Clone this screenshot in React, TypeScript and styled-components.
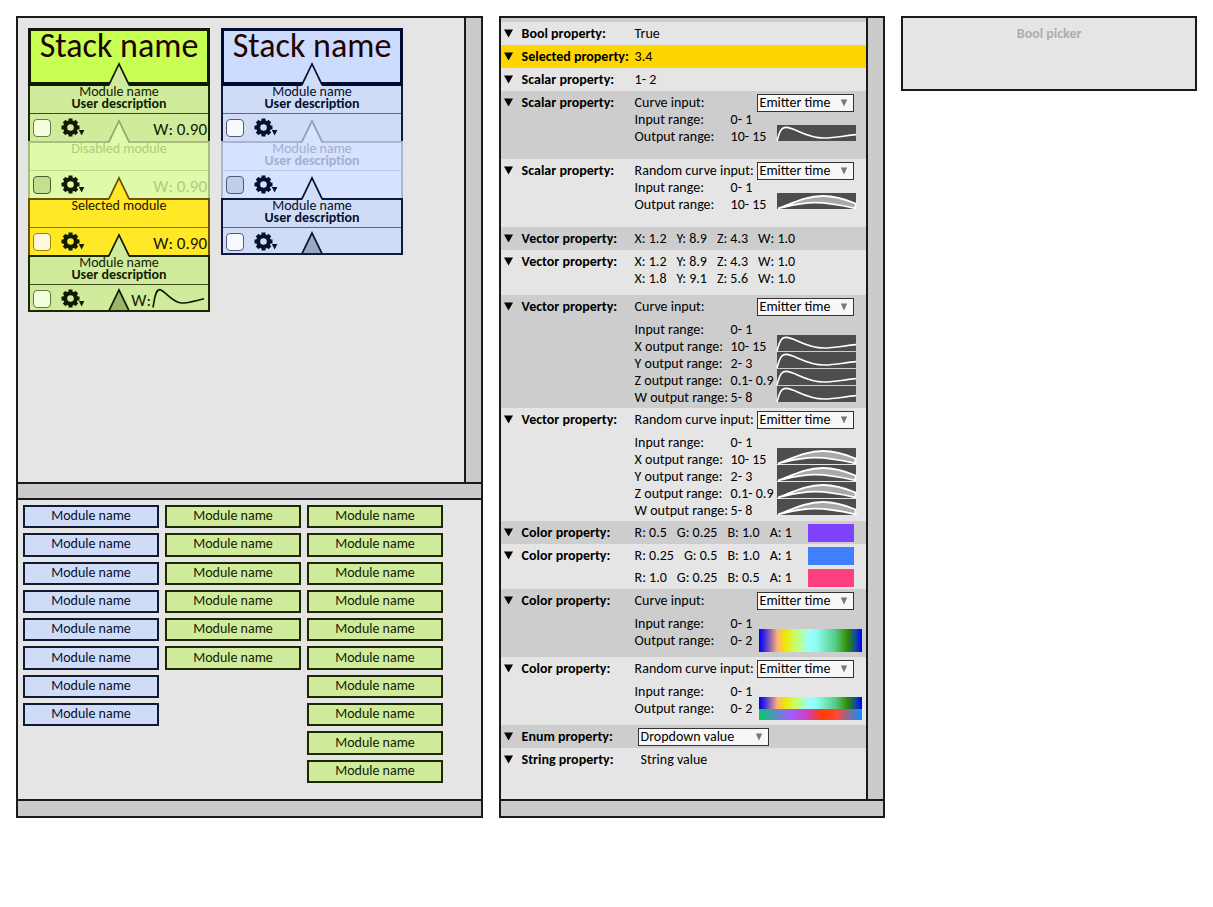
import React from "react";
import styled, { createGlobalStyle, css } from "styled-components";

const GlobalStyle = createGlobalStyle`
  *, *::before, *::after { box-sizing: border-box; }
  body { margin: 0; background: #fff; }
  body, button, input, select {
    font-family: Carlito, Calibri, Lato, "Liberation Sans", sans-serif;
    font-size: 14px;
    line-height: 17px;
    color: #000;
  }
  ul, dl, dd { margin: 0; padding: 0; list-style: none; }
`;

type Tone = "green" | "blue";
type State = "normal" | "disabled" | "selected";

interface Skin {
  fill: string;
  line: string;
  notch: string;
  divider: string;
  text: string;
  tick: string;
  tickLine: string;
}

const selectedSkin: Skin = {
  fill: "#ffe926",
  line: "#6e5200",
  notch: "#6e4a00",
  divider: "#8a7400",
  text: "#1c1400",
  tick: "#fffadb",
  tickLine: "#9c8600",
};

const skins: Record<Tone, Record<State, Skin>> = {
  green: {
    normal: { fill: "#d1eb9d", line: "#1c2900", notch: "#111a00", divider: "#3c4a1c", text: "#111c00", tick: "#f5ffe0", tickLine: "#66783d" },
    disabled: { fill: "#dffaa9", line: "#a9be7c", notch: "#93a56c", divider: "#bcd68a", text: "#b1cb81", tick: "#c5df92", tickLine: "#4d5c2c" },
    selected: selectedSkin,
  },
  blue: {
    normal: { fill: "#d0dcf6", line: "#0e1a3a", notch: "#04102e", divider: "#5a6684", text: "#04102e", tick: "#f7f9ff", tickLine: "#4f5b7a" },
    disabled: { fill: "#d6e2ff", line: "#a9b5d2", notch: "#919cb8", divider: "#bac7e6", text: "#a5b0cc", tick: "#c1cde9", tickLine: "#4f5b7a" },
    selected: selectedSkin,
  },
};

const gearColor: Record<Tone, string> = { green: "#111a00", blue: "#04102e" };
const endFill: Record<Tone, string> = { green: "#9cb569", blue: "#9ba7c3" };

/* ---------- page frame ---------- */

const Page = styled.main`
  display: grid;
  grid-template-columns: 467fr 387fr 296fr;
  gap: 16px;
  align-items: start;
  padding: 16px;
`;

const Panel = styled.section`
  border: 2px solid #1a1a1a;
  background: #e5e5e5;
  min-width: 0;
`;

const Scroller = styled.div`
  display: flex;
`;

const VerticalBar = styled.div`
  flex: none;
  width: 17px;
  border-left: 2px solid #1a1a1a;
  background: #cbcbcb;
`;

const HorizontalBar = styled.div<{ $middle?: boolean }>`
  height: ${(p) => (p.$middle ? 18 : 17)}px;
  border-top: 2px solid #1a1a1a;
  border-bottom: ${(p) => (p.$middle ? "2px solid #1a1a1a" : "none")};
  background: #cbcbcb;
`;

/* ---------- stacks ---------- */

const StackArea = styled.div`
  flex: 1;
  min-width: 0;
  min-height: 464px;
  display: flex;
  align-items: flex-start;
  gap: 11px;
  padding: 10px;
`;

const StackBox = styled.article`
  width: 182px;
  flex: none;
`;

const StackTitle = styled.h2<{ $tone: Tone }>`
  margin: 0;
  height: 58px;
  border: 3px solid ${(p) => (p.$tone === "green" ? "#111a00" : "#000d33")};
  border-bottom-width: 4px;
  background: ${(p) => (p.$tone === "green" ? "#c7ff52" : "#ccdcff")};
  color: #1f0300;
  font-size: 34px;
  font-weight: 400;
  line-height: 30px;
  text-align: center;
  white-space: nowrap;
`;

const ModuleBox = styled.div<{ $skin: Skin }>`
  position: relative;
  height: 57px;
  display: flex;
  flex-direction: column;
  border: 2px solid ${(p) => p.$skin.line};
  border-bottom-width: 0;
  background: ${(p) => p.$skin.fill};
  color: ${(p) => p.$skin.text};
  &:first-of-type { border-top: 0; height: 55px; }
  &:last-of-type { border-bottom-width: 2px; }
`;

const ModuleHead = styled.div<{ $skin: Skin }>`
  height: 28px;
  flex: none;
  border-bottom: 1px solid ${(p) => p.$skin.divider};
  line-height: 12px;
  text-align: center;
  display: flex;
  flex-direction: column;
`;

const ModuleControls = styled.div`
  flex: none;
  height: 27px;
  display: flex;
  align-items: center;
  padding: 0 1px 0 3px;
`;

const Tick = styled.input<{ $skin: Skin }>`
  appearance: none;
  margin: 0;
  width: 18px;
  height: 18px;
  border: 1px solid ${(p) => p.$skin.tickLine};
  border-radius: 4px;
  background: ${(p) => p.$skin.tick};
`;

const GearButton = styled.button`
  margin: 0 0 0 10px;
  padding: 0;
  border: 0;
  background: none;
  display: flex;
`;

const Weight = styled.span`
  margin-left: auto;
  padding-top: 4px;
  display: flex;
  align-items: center;
  font-size: 17px;
  line-height: 18px;
`;

const NotchSvg = styled.svg<{ $end?: boolean }>`
  position: absolute;
  left: 50%;
  margin-left: -12px;
  ${(p) => (p.$end ? css`bottom: 0;` : css`bottom: 100%;`)}
`;

function Notch({ fill, line, end }: { fill: string; line: string; end?: boolean }) {
  const height = end ? 22 : 24;
  return (
    <NotchSvg width="24" height={height} viewBox={`0 0 24 ${height}`} $end={end} aria-hidden="true">
      <path d="M1.5 24 L2 22.6 L12 2 L22 22.6 L22.5 24 Z" fill={fill} />
      <path d="M1 23.4 L2 22.6 L12 2 L22 22.6 L23 23.4" fill="none" stroke={line} strokeWidth="1.7" />
    </NotchSvg>
  );
}

function Gear({ color }: { color: string }) {
  return (
    <svg width="25" height="20" viewBox="0 0 25 20" aria-hidden="true">
      <circle cx="9.5" cy="9.5" r="5.3" fill="none" stroke={color} strokeWidth="4" />
      {[0, 45, 90, 135, 180, 225, 270, 315].map((a) => (
        <rect key={a} x="7.5" y="0.5" width="4" height="4" fill={color} transform={`rotate(${a} 9.5 9.5)`} />
      ))}
      <path d="M17.8 12 H23.4 L20.6 17.6 Z" fill={color} />
    </svg>
  );
}

function WeightCurve() {
  return (
    <svg width="56" height="28" viewBox="0 0 56 28" aria-hidden="true">
      <path d="M2 20.5 C3.5 13 4 3 8.5 2.6 C13 2.4 21 16 31 16 C38 16 45 13.5 53 11.8" fill="none" stroke="#111a00" strokeWidth="1.6" />
    </svg>
  );
}

interface ModuleData {
  name: string;
  description?: string;
  state: State;
  weight?: string;
  curve?: boolean;
}

function Module({ data, tone, last }: { data: ModuleData; tone: Tone; last: boolean }) {
  const skin = skins[tone][data.state];
  return (
    <ModuleBox $skin={skin}>
      <Notch fill={skin.fill} line={skin.notch} />
      <ModuleHead $skin={skin}>
        <span>{data.name}</span>
        {data.description && <strong>{data.description}</strong>}
      </ModuleHead>
      <ModuleControls>
        <Tick type="checkbox" $skin={skin} aria-label={`Enable ${data.name}`} />
        <GearButton type="button" aria-label="Module settings">
          <Gear color={gearColor[tone]} />
        </GearButton>
        {data.weight && <Weight>W: {data.weight}</Weight>}
        {data.curve && (
          <Weight>
            W:
            <WeightCurve />
          </Weight>
        )}
      </ModuleControls>
      {last && <Notch end fill={endFill[tone]} line={skin.notch} />}
    </ModuleBox>
  );
}

const stacks: { tone: Tone; modules: ModuleData[] }[] = [
  {
    tone: "green",
    modules: [
      { name: "Module name", description: "User description", state: "normal", weight: "0.90" },
      { name: "Disabled module", state: "disabled", weight: "0.90" },
      { name: "Selected module", state: "selected", weight: "0.90" },
      { name: "Module name", description: "User description", state: "normal", curve: true },
    ],
  },
  {
    tone: "blue",
    modules: [
      { name: "Module name", description: "User description", state: "normal" },
      { name: "Module name", description: "User description", state: "disabled" },
      { name: "Module name", description: "User description", state: "normal" },
    ],
  },
];

/* ---------- palette ---------- */

const Palette = styled.div`
  display: flex;
  gap: 6px;
  min-height: 299px;
  padding: 5px;
`;

const PaletteColumn = styled.ul`
  width: 136px;
  height: 278px;
  display: grid;
  grid-template-rows: repeat(10, 1fr);
  row-gap: 5px;
`;

const PaletteItem = styled.button<{ $tone: Tone }>`
  display: block;
  width: 100%;
  height: 100%;
  padding: 0 0 2px;
  border: 2px solid ${(p) => skins[p.$tone].normal.line};
  background: ${(p) => skins[p.$tone].normal.fill};
  color: ${(p) => skins[p.$tone].normal.text};
`;

const palette: { tone: Tone; count: number }[] = [
  { tone: "blue", count: 8 },
  { tone: "green", count: 6 },
  { tone: "green", count: 10 },
];

/* ---------- properties ---------- */

const PropertyList = styled.div`
  flex: 1;
  min-width: 0;
  min-height: 781px;
  padding-top: 4px;
  background: linear-gradient(#cdcdcd 4px, transparent 4px);
`;

const PropertyRow = styled.div<{ $shade?: Shade; $height: number }>`
  display: grid;
  grid-template-columns: 21px 113px 1fr;
  min-height: ${(p) => p.$height}px;
  padding: 3px 12px 0 0;
  background: ${(p) => (p.$shade === "selected" ? "#ffd500" : p.$shade === "dark" ? "#cdcdcd" : "#e5e5e5")};
`;

const Toggle = styled.button`
  height: 17px;
  padding: 0 0 0 3px;
  border: 0;
  background: none;
  display: flex;
  align-items: center;
`;

const PropertyName = styled.strong`
  white-space: nowrap;
`;

const Lines = styled.div<{ $gap?: number }>`
  display: flex;
  flex-direction: column;
  gap: ${(p) => p.$gap ?? 0}px;
  min-width: 0;
  white-space: nowrap;
`;

const Line = styled.div`
  display: flex;
  height: 17px;
`;

const Channels = styled.span`
  flex: 1;
  display: flex;
  gap: 10px;
`;

const Swatch = styled.span<{ $color: string }>`
  width: 46px;
  height: 18px;
  background: ${(p) => p.$color};
`;

const CurveKind = styled.label`
  flex: 0 0 122px;
`;

const SelectWrap = styled.span<{ $wide?: boolean }>`
  position: relative;
  flex: none;
  width: ${(p) => (p.$wide ? 131 : 97)}px;
  height: 18px;
  margin-left: ${(p) => (p.$wide ? 3 : 0)}px;
`;

const SelectBox = styled.select`
  appearance: none;
  display: block;
  width: 100%;
  height: 18px;
  padding: 0 0 0 2px;
  border: 1px solid #333;
  border-radius: 0;
  background: #f7f7f7;
  line-height: 16px;
`;

const SelectArrow = styled.svg`
  position: absolute;
  right: 6px;
  top: 5px;
  pointer-events: none;
`;

const CurveBody = styled.div`
  display: flex;
`;

const Ranges = styled.dl<{ $width: number }>`
  flex: none;
  width: ${(p) => p.$width}px;
  display: grid;
  grid-template-columns: 96px auto;
  grid-auto-rows: 17px;
`;

const Graphs = styled.div`
  display: flex;
  flex-direction: column;
  gap: 1px;
  padding-top: 14px;
  height: 0;
`;

const Graph = styled.svg`
  display: block;
  flex: none;
  background: #4d4d4d;
  overflow: visible;
`;

const Gradient = styled.div<{ $height: number; $stops: string }>`
  width: 103px;
  height: ${(p) => p.$height}px;
  margin-bottom: -1px;
  flex: none;
  background: linear-gradient(90deg, ${(p) => p.$stops});
`;

const TextField = styled.input`
  width: 100%;
  height: 17px;
  padding: 0 0 0 6px;
  border: 0;
  background: transparent;
`;

const rainbow =
  "#0000ff 0%, #2a1ee0 4%, #ffb377 18%, #f0e400 25%, #c8ff60 35%, #99ffff 49%, #8ffcf0 56%, #55cc88 74%, #2e8b00 86%, #1048a0 94%, #0000ff 100%";
const ember = "#00cc66 0%, #9e60ff 29%, #cc40c8 46%, #ff3c00 61%, #ff4838 75%, #1a8cf5 98%, #1a8cf5 100%";

type Shade = "light" | "dark" | "selected";

function Down() {
  return (
    <svg width="9" height="9" viewBox="0 0 9 9" aria-hidden="true">
      <path d="M0 0.5 H9 L4.5 8.5 Z" fill="#000" />
    </svg>
  );
}

function Dropdown({ id, value, wide }: { id?: string; value: string; wide?: boolean }) {
  return (
    <SelectWrap $wide={wide}>
      <SelectBox id={id} aria-label={id ? undefined : "Enum value"} defaultValue={value}>
        <option>{value}</option>
      </SelectBox>
      <SelectArrow width="8" height="8" viewBox="0 0 8 8" aria-hidden="true">
        <path d="M0.8 0.5 H7.2 L4 7.5 Z" fill="#777" />
      </SelectArrow>
    </SelectWrap>
  );
}

function Property({ name, shade = "light", height = 23, gap, children }: {
  name: string;
  shade?: Shade;
  height?: number;
  gap?: number;
  children: React.ReactNode;
}) {
  return (
    <PropertyRow $shade={shade} $height={height}>
      <Toggle type="button" aria-label={`Collapse ${name}`}>
        <Down />
      </Toggle>
      <PropertyName>{name}:</PropertyName>
      <Lines $gap={gap}>{children}</Lines>
    </PropertyRow>
  );
}

function ChannelLine({ values, color }: { values: string[]; color?: string }) {
  return (
    <Line>
      <Channels>
        {values.map((v) => (
          <span key={v}>{v}</span>
        ))}
      </Channels>
      {color && <Swatch $color={color} />}
    </Line>
  );
}

function CurveGraph({ random }: { random: boolean }) {
  return (
    <Graph width="79" height="16" viewBox="0 0 79 16" aria-hidden="true">
      {random ? (
        <path
          d="M1 15.6 C14 11 28 3 46 3 C60 3 70 7 78.5 10.5 V15.4 C66 12.5 54 9.6 38 9.6 C22 9.6 12 13 1 15.6 Z"
          fill="#a8a8a8"
          stroke="#fff"
          strokeWidth="1.8"
        />
      ) : (
        <path d="M0 16 C2 9 3.5 2.4 9 2.4 C18 2.4 28 13 47 13 C58 13 68 10.5 79 9.6" fill="none" stroke="#fff" strokeWidth="1.6" />
      )}
    </Graph>
  );
}

function CurveLines({ id, random = false, ranges, gradient }: {
  id: string;
  random?: boolean;
  ranges: [string, string][];
  gradient?: boolean;
}) {
  return (
    <>
      <Line>
        <CurveKind htmlFor={id}>{random ? "Random curve input:" : "Curve input:"}</CurveKind>
        <Dropdown id={id} value="Emitter time" />
      </Line>
      <CurveBody>
        <Ranges $width={gradient ? 124 : 142}>
          {ranges.map(([label, value]) => (
            <React.Fragment key={label}>
              <dt>{label}:</dt>
              <dd>{value}</dd>
            </React.Fragment>
          ))}
        </Ranges>
        <Graphs>
          {gradient ? (
            <>
              <Gradient $height={random ? 12 : 23} $stops={rainbow} />
              {random && <Gradient $height={11} $stops={ember} />}
            </>
          ) : (
            ranges.slice(1).map(([label]) => <CurveGraph key={label} random={random} />)
          )}
        </Graphs>
      </CurveBody>
    </>
  );
}

const scalarRanges: [string, string][] = [["Input range", "0- 1"], ["Output range", "10- 15"]];
const colorRanges: [string, string][] = [["Input range", "0- 1"], ["Output range", "0- 2"]];
const vectorRanges: [string, string][] = [
  ["Input range", "0- 1"],
  ["X output range", "10- 15"],
  ["Y output range", "2- 3"],
  ["Z output range", "0.1- 0.9"],
  ["W output range", "5- 8"],
];

/* ---------- picker ---------- */

const PickerPanel = styled(Panel)`
  min-height: 75px;
  padding-top: 7px;
`;

const PickerTitle = styled.h2`
  margin: 0;
  font-size: 14px;
  line-height: 17px;
  color: #adadad;
  text-align: center;
`;

export default function App() {
  return (
    <>
      <GlobalStyle />
      <Page>
        <Panel>
          <Scroller>
            <StackArea>
              {stacks.map((s) => (
                <StackBox key={s.tone}>
                  <StackTitle $tone={s.tone}>Stack name</StackTitle>
                  {s.modules.map((m, i) => (
                    <Module key={i} data={m} tone={s.tone} last={i === s.modules.length - 1} />
                  ))}
                </StackBox>
              ))}
            </StackArea>
            <VerticalBar />
          </Scroller>
          <HorizontalBar $middle />
          <Palette>
            {palette.map((c, i) => (
              <PaletteColumn key={i}>
                {Array.from({ length: c.count }, (_, n) => (
                  <li key={n}>
                    <PaletteItem type="button" $tone={c.tone}>Module name</PaletteItem>
                  </li>
                ))}
              </PaletteColumn>
            ))}
          </Palette>
          <HorizontalBar />
        </Panel>

        <Panel>
          <Scroller>
            <PropertyList>
              <Property name="Bool property">True</Property>
              <Property name="Selected property" shade="selected">3.4</Property>
              <Property name="Scalar property">1- 2</Property>
              <Property name="Scalar property" shade="dark" height={68}>
                <CurveLines id="scalar-curve" ranges={scalarRanges} />
              </Property>
              <Property name="Scalar property" height={68}>
                <CurveLines id="scalar-random" random ranges={scalarRanges} />
              </Property>
              <Property name="Vector property" shade="dark">
                <ChannelLine values={["X: 1.2", "Y: 8.9", "Z: 4.3", "W: 1.0"]} />
              </Property>
              <Property name="Vector property" height={45}>
                <ChannelLine values={["X: 1.2", "Y: 8.9", "Z: 4.3", "W: 1.0"]} />
                <ChannelLine values={["X: 1.8", "Y: 9.1", "Z: 5.6", "W: 1.0"]} />
              </Property>
              <Property name="Vector property" shade="dark" height={113} gap={6}>
                <CurveLines id="vector-curve" ranges={vectorRanges} />
              </Property>
              <Property name="Vector property" height={113} gap={6}>
                <CurveLines id="vector-random" random ranges={vectorRanges} />
              </Property>
              <Property name="Color property" shade="dark">
                <ChannelLine values={["R: 0.5", "G: 0.25", "B: 1.0", "A: 1"]} color="#8040ff" />
              </Property>
              <Property name="Color property" height={45} gap={5}>
                <ChannelLine values={["R: 0.25", "G: 0.5", "B: 1.0", "A: 1"]} color="#4080ff" />
                <ChannelLine values={["R: 1.0", "G: 0.25", "B: 0.5", "A: 1"]} color="#ff4080" />
              </Property>
              <Property name="Color property" shade="dark" height={68} gap={6}>
                <CurveLines id="color-curve" ranges={colorRanges} gradient />
              </Property>
              <Property name="Color property" height={68} gap={6}>
                <CurveLines id="color-random" random ranges={colorRanges} gradient />
              </Property>
              <Property name="Enum property" shade="dark">
                <Line>
                  <Dropdown value="Dropdown value" wide />
                </Line>
              </Property>
              <Property name="String property">
                <TextField type="text" aria-label="String property" defaultValue="String value" />
              </Property>
            </PropertyList>
            <VerticalBar />
          </Scroller>
          <HorizontalBar />
        </Panel>

        <PickerPanel>
          <PickerTitle>Bool picker</PickerTitle>
        </PickerPanel>
      </Page>
    </>
  );
}
